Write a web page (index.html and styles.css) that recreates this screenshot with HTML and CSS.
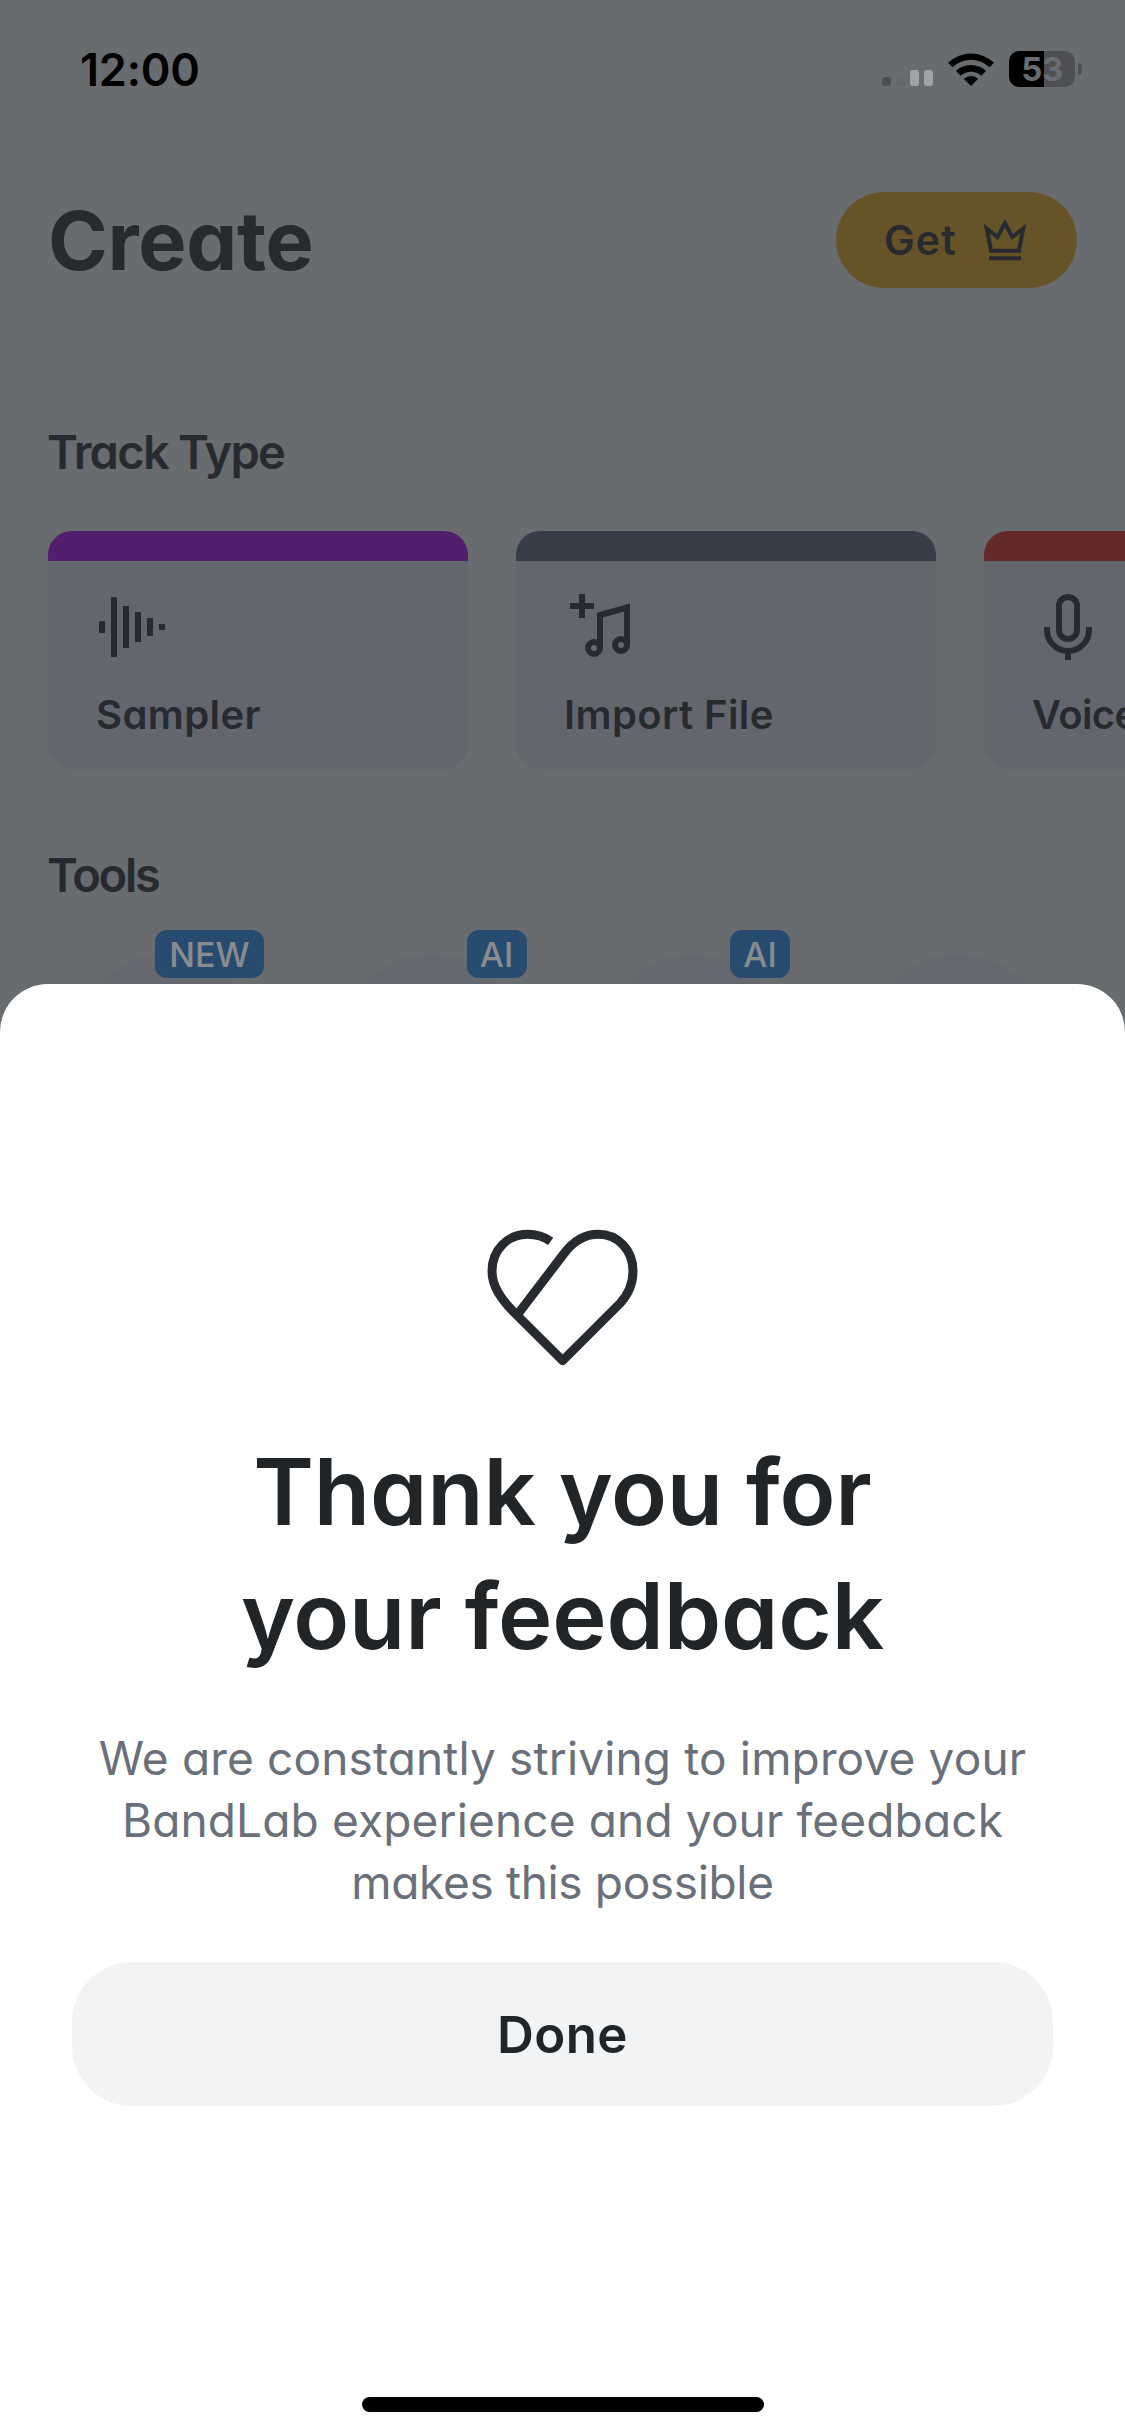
FILE: index.html
```html
<!DOCTYPE html>
<html lang="en">
<head>
<meta charset="utf-8">
<title>Create</title>
<link rel="stylesheet" href="styles.css">
</head>
<body>
<div class="screen">
  <div class="status">
    <span class="time">12:00</span>
    <div class="indicators">
      <div class="signal"><i class="dot"></i><i class="dot faint"></i><i class="bar"></i><i class="bar"></i></div>
      <svg class="wifi" viewBox="0 0 46 33"><path d="M0 9.800A33 33 0 0 1 46 9.800L41.500 14.300A26.500 26.500 0 0 0 4.500 14.300ZM8 18A22 22 0 0 1 38 18L33.300 22.700A15.300 15.300 0 0 0 12.700 22.700ZM15.800 25.700A10.600 10.600 0 0 1 30.200 25.700L23 33Z"/></svg>
      <div class="battery"><div class="cell">53</div><i class="nub"></i></div>
    </div>
  </div>
  <header class="header">
    <h1>Create</h1>
    <button class="get"><span>Get</span>
      <svg viewBox="0 0 42 42"><path d="M2.700 9.500L13.500 18L20.900 4.300L28.300 18L39.300 9.500L34.900 31.700H7.100Z"/><path d="M5 39.300H37"/></svg>
    </button>
  </header>
  <h2 class="track-title">Track Type</h2>
  <div class="cards">
    <div class="card sampler">
      <svg viewBox="0 0 72 72"><path class="fill" d="M3 30h6v12H3zM15 6h6v60h-6zM27 15h6v42h-6zM39 21h6v30h-6zM51 27h6v18h-6zM63 33h6v6h-6z"/></svg>
      <p>Sampler</p>
    </div>
    <div class="card import">
      <svg viewBox="0 0 72 72"><path d="M6 15H30M18 3V27M36 57V24L63 16.500V54"/><circle cx="30" cy="57" r="6"/><circle cx="57" cy="54" r="6"/></svg>
      <p>Import File</p>
    </div>
    <div class="card voice">
      <svg viewBox="0 0 72 72"><rect x="27" y="6" width="18" height="42" rx="9"/><path d="M15 36V39A21 21 0 0 0 57 39V36M36 60V69"/></svg>
      <p>Voice</p>
    </div>
  </div>
  <h2 class="tools-title">Tools</h2>
  <div class="tools">
    <div class="tool"><b class="new">NEW</b></div>
    <div class="tool"><b>AI</b></div>
    <div class="tool"><b>AI</b></div>
    <div class="tool"></div>
  </div>
  <section class="sheet">
    <svg class="heart" viewBox="0 0 615 570"><path d="M272 124C252 110 229 103 203 103C142 103 96 150 96 213C96 260 124 297 160 335L308 482L480 310C505 283 519 252 519 213C519 150 474 103 415 103C375 103 338 126 311 162L172 344"/></svg>
    <h3>Thank you for<br>your feedback</h3>
    <p class="message">We are constantly striving to improve your<br>BandLab experience and your feedback<br><span class="last">makes this possible</span></p>
    <button class="done">Done</button>
    <div class="home"></div>
  </section>
</div>
</body>
</html>
```
FILE: styles.css
```css
* { box-sizing: border-box; margin: 0; padding: 0; }
body { width: 1125px; height: 2436px; overflow: hidden; }
button { border: 0; font: inherit; color: inherit; }
svg { display: block; flex: none; }

.screen {
  position: relative;
  width: 1125px;
  height: 2436px;
  overflow: hidden;
  background: #686c6e;
  color: #272b2f;
  font-family: Inter, "Liberation Sans", sans-serif;
  font-feature-settings: "cv11" 1;
  white-space: nowrap;
}

.status { display: flex; justify-content: space-between; align-items: center; height: 138px; padding: 0 43px 0 80px; color: #000; }
.time { font-size: 45px; font-weight: 600; letter-spacing: -0.2px; }
.indicators { display: flex; align-items: center; }
.signal { display: flex; align-items: flex-end; gap: 5px; height: 33px; }
.signal i { width: 9px; border-radius: 3px; }
.dot { height: 9px; background: #4e5154; }
.signal .faint { background: #646869; }
.bar { height: 16px; background: #a1a4a6; }
.wifi { width: 46px; height: 33px; margin-left: 15px; }
.battery { display: flex; align-items: center; gap: 3px; margin-left: 15px; }
.cell { width: 66px; height: 36px; border-radius: 10px; background: linear-gradient(to right, #000 35px, #4e5054 35px); font-size: 33px; font-weight: 700; line-height: 36px; letter-spacing: -0.5px; text-align: center; color: #696d6f; }
.nub { width: 4px; height: 12px; border-radius: 0 4px 4px 0; background: #4e5054; }

.header { display: flex; justify-content: space-between; align-items: center; height: 96px; margin-top: 54px; padding: 0 48px; }
h1 { padding-top: 2px; font-size: 81px; font-weight: 700; line-height: 96px; letter-spacing: -0.3px; }
.get { display: flex; align-items: center; justify-content: space-between; width: 241px; height: 96px; padding: 0 51px 0 48px; border-radius: 48px; background: #675328; font-size: 41px; font-weight: 600; letter-spacing: 1.1px; }
.get svg { width: 42px; height: 42px; fill: none; stroke: currentColor; stroke-width: 4; }

h2 { padding: 1px 0 0 47px; font-size: 47px; font-weight: 600; line-height: 60px; }
.track-title { margin-top: 133px; letter-spacing: -1.7px; }
.cards { display: flex; gap: 48px; margin-top: 49px; padding-left: 48px; }
.card { flex: none; width: 420px; height: 238px; padding: 60px 48px 0; border-radius: 24px; background: linear-gradient(var(--accent) 30px, #64666e 30px); }
.sampler { --accent: #521e6e; }
.import { --accent: #383e47; }
.voice { --accent: #642a2a; }
.card svg { width: 72px; height: 72px; fill: none; stroke: currentColor; stroke-width: 6; }
.card .fill { fill: currentColor; stroke: none; }
.card p { margin-top: 28px; font-size: 40px; font-weight: 600; line-height: 48px; letter-spacing: 0.4px; }
.voice p { letter-spacing: -0.6px; }

.tools-title { margin-top: 75px; letter-spacing: -2.2px; }
.tools { display: flex; gap: 83.5px; margin-top: 49px; padding-left: 78px; }
.tool { position: relative; flex: none; width: 180px; height: 180px; border-radius: 50%; background: #65686e; }
.tool b { position: absolute; top: -24px; right: -5px; width: 60px; height: 48px; border-radius: 12px; background: #284b70; color: #898b8d; text-align: center; font-size: 34px; font-weight: 500; line-height: 49px; }
.tool .new { right: -6px; width: 109px; }

.sheet { position: absolute; left: 0; top: 984px; display: flex; flex-direction: column; align-items: center; width: 1125px; height: 1452px; border-radius: 48px 48px 0 0; background: #fff; color: #222527; }
.heart { width: 205px; height: 190px; margin-top: 216px; fill: none; stroke: #272b2f; stroke-width: 27; stroke-linejoin: round; }
h3 { margin-top: 40px; font-size: 92px; font-weight: 600; line-height: 124px; letter-spacing: -0.15px; text-align: center; }
.message { margin-top: 49px; color: #6a707a; font-size: 46px; line-height: 62px; letter-spacing: 0.15px; text-align: center; }
.message .last { letter-spacing: -0.35px; }
.done { width: 981px; height: 144px; margin-top: 49px; border-radius: 60px; background: #f2f3f5; font-size: 51px; font-weight: 600; letter-spacing: 0.4px; }
.home { width: 402px; height: 15px; margin-top: 291px; border-radius: 8px; background: #000; }
```
